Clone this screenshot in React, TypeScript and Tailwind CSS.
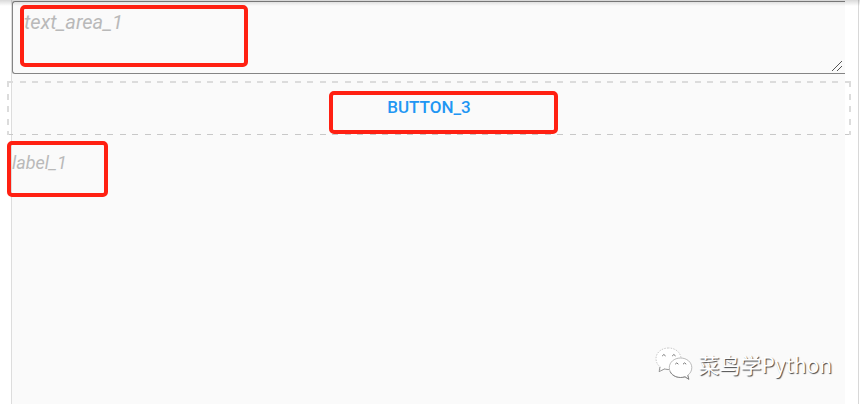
import type { ReactNode } from "react";

function Highlight({ className }: { className: string }) {
  return (
    <span
      aria-hidden="true"
      className={`pointer-events-none absolute z-10 rounded-[5px] border-4 border-[#ff2012] ${className}`}
    />
  );
}

const dashX =
  "absolute inset-x-0 bg-[repeating-linear-gradient(90deg,currentColor_0_6px,transparent_6px_13px,currentColor_13px_19px,transparent_19px_25px)]";
const dashY =
  "absolute inset-y-0 w-0.5 bg-[repeating-linear-gradient(180deg,currentColor_0_6px,transparent_6px_13px,currentColor_13px_19px,transparent_19px_25px)]";

function DropZone({ children }: { children: ReactNode }) {
  return (
    <div className="relative -ml-[5px] -mr-1.5 mt-[7px] flex h-[54px] items-start justify-center pt-2">
      <span className={`${dashX} top-0 h-0.5 text-[#dcdcdc]`} />
      <span className={`${dashX} bottom-0 h-px text-[#c8c8c8]`} />
      <span className={`${dashY} left-0 text-[#dcdcdc]`} />
      <span className={`${dashY} right-0 text-[#dcdcdc]`} />
      {children}
    </div>
  );
}

function ResizeGrip() {
  return (
    <svg
      aria-hidden="true"
      viewBox="0 0 12 12"
      className="pointer-events-none absolute bottom-0.5 right-0.5 size-3"
      fill="none"
      stroke="#555"
      strokeWidth="1"
    >
      <path d="M1 11 11 1M6 11l5-5" />
    </svg>
  );
}

function WeChatIcon() {
  return (
    <svg viewBox="0 0 38 34" className="h-[34px] w-[38px]" fill="#fff" strokeWidth="0.8" strokeLinejoin="round">
      <path
        d="M13.5 1C6.600 1 1 5.600 1 11.600c0 3.700 1.800 6.600 4.600 8.500L4.200 24.600l5.200-2.600c1.600.5 3 .7 4.600.6C22 22 26 17 26 11 25.400 5.300 20.400 1 13.500 1Z"
        stroke="#bbb"
        strokeDasharray="1.500 1.200"
      />
      <path d="M4.800 20 4.200 24.600l5.200-2.600 4.600.6" fill="none" stroke="#888" />
      <path
        d="M25.500 11C19.300 11 14.300 15.200 14.300 20.600s5 9.900 11.200 9.900c1.600 0 3.100-.2 4.500-.7l3.800 2.500-1-4.100c2.500-1.800 4-4.400 4-7.600C36.800 15.200 31.800 11 25.500 11Z"
        stroke="#aaa"
      />
      <path d="M15 24.500c1.700 3.600 5.700 6 10.500 6 1.600 0 3.100-.2 4.500-.7l3.800 2.500-1-4.100" fill="none" stroke="#777" />
      <path
        d="M7.200 9q1.600-3 3.400 0M17.200 9q1.600-3 3.400 0M20.200 17.200q1.500-2.600 3.200 0M28 17.200q1.500-2.600 3.200 0"
        fill="none"
        stroke="#777"
        strokeWidth="1"
      />
    </svg>
  );
}

export default function App() {
  return (
    <div className="relative min-h-screen overflow-hidden bg-white font-[Roboto,sans-serif]">
      <div className="mr-px min-h-screen border-r border-[#d8d8d8] pl-[11px] pr-[13px]">
        <main className="min-h-screen border-l border-[#dddddd] bg-[#fafafa]">
          <div className="relative pt-px">
            <textarea
              aria-label="text_area_1"
              placeholder="text_area_1"
              className="block h-[73px] w-full resize-none rounded-l-[3px] border border-r-0 border-[#858585] bg-transparent px-[11px] pt-2 text-xl leading-6 outline-none placeholder:italic placeholder:text-[#b9b9b9]"
            />
            <ResizeGrip />
            <Highlight className="left-2 top-[5px] h-[62px] w-[228px]" />
          </div>

          <DropZone>
            <button type="button" className="h-9 px-4 text-[17px] font-medium leading-9 text-[#2196f3]">
              BUTTON_3
            </button>
            <Highlight className="left-[322px] top-2.5 h-[43px] w-[229px]" />
          </DropZone>

          <div className="relative pt-4">
            <p className="text-lg italic leading-6 text-[#b9b9b9]">label_1</p>
            <Highlight className="-left-[5px] top-1.5 h-[56px] w-[101px]" />
          </div>
        </main>
      </div>

      <div className="pointer-events-none absolute inset-x-0 top-0 h-1.5 bg-linear-to-b from-black/15 to-transparent" />

      <div className="absolute bottom-[23px] right-7 flex items-center gap-1.5">
        <WeChatIcon />
        <span className="font-['Noto_Sans_CJK_SC','Noto_Sans',sans-serif] text-[21px] leading-8 text-white [text-shadow:1px_1px_1px_#444]">
          菜鸟学Python
        </span>
      </div>
    </div>
  );
}
